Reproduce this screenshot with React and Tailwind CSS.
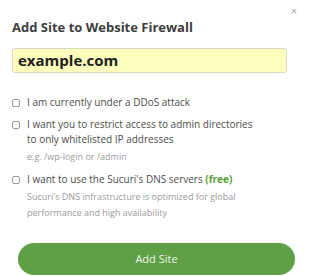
import React from 'react';

const Box = () => (
  <span className="mt-[3.5px] block h-[8px] w-[8px] shrink-0 rounded-[2px] border border-[#9a9a9a] bg-white" />
);

const App = () => {
  return (
    <div className="relative h-[276px] w-[300px] overflow-hidden bg-white font-['Open_Sans',sans-serif]">
      {/* close */}
      <span className="absolute right-[3px] top-[5px] text-[11px] font-bold leading-none text-[#b5b5b5]">×</span>

      <div className="px-3 pt-[17px]">
        <h2 className="text-[13px] font-bold leading-[20px] text-[#3d3d3d]">
          Add Site to Website Firewall
        </h2>

        <div className="mt-[11px] flex h-[25px] w-[275px] items-center rounded-[3px] border border-[#d6dbc5] bg-[#fdfdbd] px-[5px] text-[15px] font-bold text-[#222]">
          example.com
        </div>

        {/* options */}
        <div className="mt-[22px] flex gap-[7px] text-[10px] leading-[15px] text-[#4d4d4d]">
          <Box />
          <span>I am currently under a DDoS attack</span>
        </div>

        <div className="mt-[7px] flex gap-[7px] text-[10px] leading-[15px] text-[#4d4d4d]">
          <Box />
          <div>
            <p className="w-[234px]">I want you to restrict access to admin directories to only whitelisted IP addresses</p>
            <p className="mt-[2px] text-[9px] text-[#9b9b9b]">e.g. /wp-login or /admin</p>
          </div>
        </div>

        <div className="mt-[8px] flex gap-[7px] text-[10px] leading-[15px] text-[#4d4d4d]">
          <Box />
          <div>
            <p>
              I want to use the Sucuri's DNS servers <span className="font-bold text-[#5aa03a]">(free)</span>
            </p>
            <p className="mt-[2px] w-[240px] text-[9px] leading-[16px] text-[#9b9b9b]">
              Sucuri's DNS infrastructure is optimized for global performance and high availability
            </p>
          </div>
        </div>
      </div>

      <div className="mt-[22px] pl-[18px]">
        <button className="h-[32px] w-[277px] rounded-full bg-[#5f9f46] text-[11px] text-[#eef5ea]">
          Add Site
        </button>
      </div>
    </div>
  );
};

export default App;
